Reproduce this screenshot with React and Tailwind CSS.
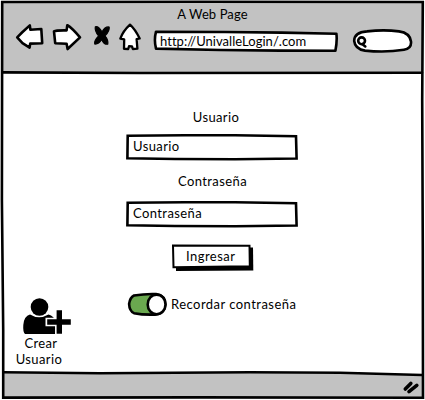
import React from "react";

function Sketch({ box, className, children }) {
  return (
    <svg
      viewBox={box}
      className={className}
      fill="none"
      stroke="#000"
      strokeWidth="2.6"
      strokeLinejoin="round"
      strokeLinecap="round"
      aria-hidden="true"
    >
      {children}
    </svg>
  );
}

function BackIcon() {
  return (
    <Sketch box="15 22 30 29" className="h-[29px] w-[30px] shrink-0">
      <path fill="#fff" d="M17.2 37.3 22 32.5 29.8 25.4 30.4 29.8 41.3 29 42.2 43.2 30.2 43.6 29.6 47.6 22.5 43.2Z" />
    </Sketch>
  );
}

function ForwardIcon() {
  return (
    <Sketch box="51 22 33 30" className="ml-[6px] h-[30px] w-[33px] shrink-0">
      <path fill="#fff" d="M54 31.4Q56 30.2 66.6 30.4L67.3 25.2Q72 28 80 37.4L67.6 49 66.6 43.8 55.2 43.2Z" />
    </Sketch>
  );
}

function StopIcon() {
  return (
    <Sketch box="92 24 20 23" className="mt-[2px] ml-[8px] h-[23px] w-[20px] shrink-0">
      <path
        fill="#000"
        strokeWidth="1.2"
        d="M95.3 26.8Q98.8 26 102 32 105 26.4 109.2 27 109.8 31 105 35.8 108.5 40 107.8 44.2 104 44.8 101.7 39.4 98.5 44.5 94.7 44 93.8 41 98.6 36 94.6 31 95.3 26.8Z"
      />
    </Sketch>
  );
}

function HomeIcon() {
  return (
    <Sketch box="117 22 26 30" className="ml-[5px] h-[30px] w-[26px] shrink-0">
      <path
        fill="#fff"
        strokeWidth="2.3"
        d="M130 24.6Q135 29 139.7 38.5L136.6 39.2 137.4 48.6 132.8 49 132 46.3 129 46.2 128.2 49 124 48.8 124.2 39.4 120.3 38.6Q123 31 130 24.6Z"
      />
    </Sketch>
  );
}

function AddressBar() {
  return (
    <div className="relative mt-[7px] ml-[10px] flex h-[24px] w-[186px] shrink-0 items-center pl-[7px]">
      <Sketch box="153 29 186 24" className="absolute inset-0 h-full w-full">
        <path fill="#fff" d="M156 31.7 225 32 282 32.6 336.4 33.7Q337.3 41 335.4 50.8L280 50.6 220 50 156 48.6Q153.8 40 156 31.7Z" />
      </Sketch>
      <span className="relative text-[13px] leading-4 tracking-[0.04px]">http://UnivalleLogin/.com</span>
    </div>
  );
}

function SearchBox() {
  return (
    <Sketch box="351 27 63 27" className="mt-[5px] ml-[12px] h-[27px] w-[63px] shrink-0">
      <path fill="#fff" d="M354.2 41Q354 32.5 367 31.4 384 29.4 399 31.4 410 33 411 41.5 411.7 48.5 404 49.8 385 52.8 365 50.6 355 49 354.2 41Z" />
      <circle cx="361.6" cy="40.8" r="3.4" />
      <path d="M362.5 44.2 365.3 46.4" />
    </Sketch>
  );
}

function Field({ label }) {
  return (
    <div className="relative flex h-[28px] w-[174px] items-center pb-[3px] pl-[8px]">
      <Sketch box="0 0 174 28" className="absolute inset-0 h-full w-full">
        <path fill="#fff" strokeLinejoin="miter" d="M2.7 2.7 60 2.3 110 2.3 171 3.3 171.6 25.5 110 26.2 50 26 2.4 25.2Z" />
      </Sketch>
      <span className="relative text-[13px] leading-4 tracking-[0.4px]">{label}</span>
    </div>
  );
}

function SubmitButton() {
  return (
    <button className="relative ml-[46px] flex h-[29px] w-[84px] items-center pb-[4px] pl-[15px]">
      <Sketch box="171 243 84 29" className="absolute inset-0 h-full w-full">
        <path fill="#000" stroke="none" d="M176 248 253 247.5 253.3 270.5 176 271Z" />
        <path fill="#fff" strokeWidth="2" strokeLinejoin="miter" d="M173 245.4 249.5 245.8 249.8 266.2 173.5 267.2Z" />
      </Sketch>
      <span className="relative text-[13px] leading-4 tracking-[0.45px]">Ingresar</span>
    </button>
  );
}

function RememberToggle() {
  return (
    <div className="mt-[19px] ml-[2px] flex h-[27px] items-center">
      <Sketch box="127 291 41 27" className="h-[27px] w-[41px] shrink-0">
        <path
          fill="#6aa84f"
          d="M134 295.5Q145 293.6 156 294 165.5 295.5 165.4 304.5 165 313.5 155 314.6 143 315 134 313.2 129.4 311 129.1 304 130 297.5 134 295.5Z"
        />
        <ellipse cx="156.6" cy="304.4" rx="8.9" ry="9.8" fill="#fff" />
      </Sketch>
      <span className="ml-[3px] pb-px text-[13px] leading-4 tracking-[0.46px] whitespace-nowrap">Recordar contraseña</span>
    </div>
  );
}

function CreateUser() {
  return (
    <div className="flex w-[60px] flex-col items-center">
      <Sketch box="22 297 50 38" className="ml-[13px] h-[38px] w-[50px] shrink-0">
        <g fill="#000" stroke="none">
          <circle cx="39.5" cy="307" r="8.8" />
          <path d="M30 314.5Q39 320 48.5 314.5 54 316 55.5 321L55.5 334 25 334Q22.8 332 23.3 325 24 316 30 314.5Z" />
        </g>
        <path stroke="#fff" strokeWidth="8.5" strokeLinecap="butt" d="M45.5 322H72M59.3 309V335" />
        <path strokeWidth="5.4" strokeLinecap="butt" d="M47.2 322H70.8M59.3 310.2V333.8" />
        <path strokeWidth="5" strokeLinecap="butt" d="M48 331.4H55" />
      </Sketch>
      <span className="ml-[2px] text-[13px] leading-4 tracking-[0.35px]">Crear</span>
      <span className="-ml-[2px] text-[13px] leading-4 tracking-[0.4px]">Usuario</span>
    </div>
  );
}

export default function App() {
  return (
    <div className="relative flex h-[400px] w-[425px] flex-col overflow-hidden bg-white font-['Lato','Noto_Sans',sans-serif] text-black">
      <header className="mt-px ml-[2px] h-[72px] w-[421px] shrink-0 bg-[#c2c2c2]">
        <h1 className="pt-[5px] text-center text-[13px] leading-4 tracking-[0.1px]">A Web Page</h1>
        <div className="flex h-[40px] items-start pl-[13px]">
          <BackIcon />
          <ForwardIcon />
          <StopIcon />
          <HomeIcon />
          <AddressBar />
          <SearchBox />
        </div>
      </header>

      <main className="flex h-[300px] shrink-0">
        <aside className="flex w-[125px] shrink-0 flex-col pt-[224px] pl-[10px]">
          <CreateUser />
        </aside>
        <section className="w-[174px] shrink-0 pt-[36px]">
          <p className="pl-[8px] text-center text-[13px] leading-4 tracking-[0.35px]">Usuario</p>
          <div className="mt-[8px]">
            <Field label="Usuario" />
          </div>
          <p className="mt-[12px] pl-px text-center text-[13px] leading-4 tracking-[0.4px]">Contraseña</p>
          <div className="mt-[11px] mb-[15px]">
            <Field label="Contraseña" />
          </div>
          <SubmitButton />
          <RememberToggle />
        </section>
      </main>

      <footer className="ml-[2px] flex h-[25px] w-[421px] shrink-0 items-center justify-end bg-[#c2c2c2] pr-[3px]">
        <Sketch box="402 378 18 18" className="mt-[2px] h-[18px] w-[18px]">
          <path strokeWidth="3.6" d="M405.3 389 410.8 383.4M409 391.6 416.8 385.4" />
        </Sketch>
      </footer>

      <Sketch box="0 0 425 400" className="pointer-events-none absolute inset-0 h-full w-full">
        <path fill="#fff" stroke="none" d="M3 370H422V374.5L250 372.8 3 373Z" />
        <path strokeLinejoin="miter" d="M2.2 2 200 1.8 422.8 2 422.2 100 422.8 250 423 397.8 200 397.4 3.2 397.6 3.2 330 1.9 200Z" />
        <path d="M2.5 72.4 140 73 422 72.8" />
        <path d="M3.5 372.3 100 373.2 250 372.2 340 372.8 422 375" />
      </Sketch>
    </div>
  );
}
